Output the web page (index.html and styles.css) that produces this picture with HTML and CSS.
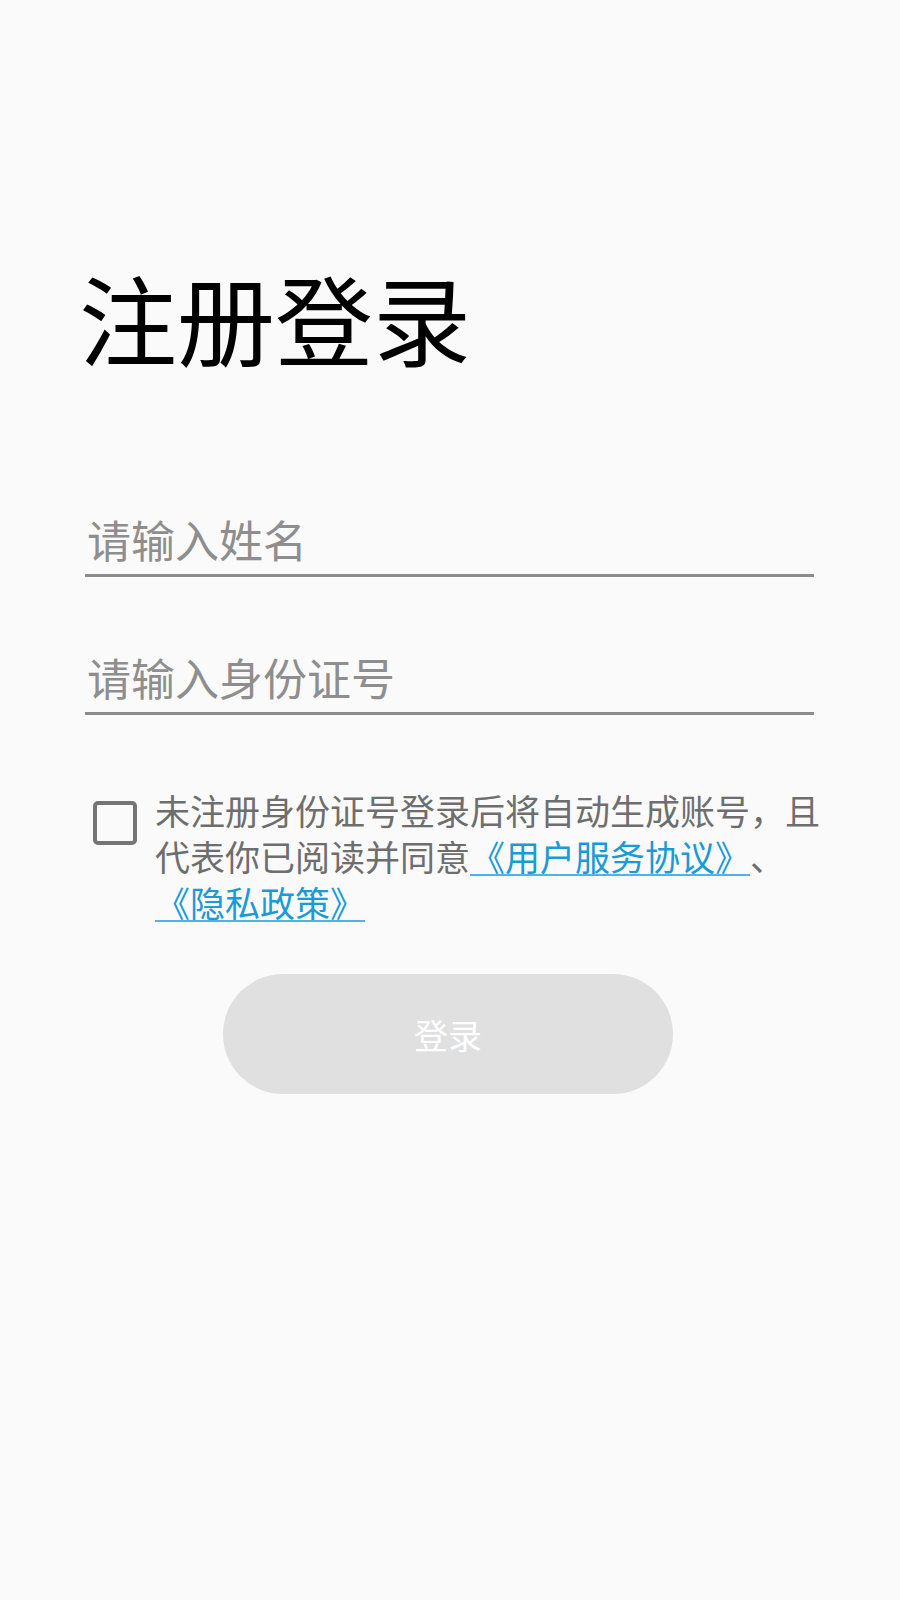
FILE: index.html
```html
<!DOCTYPE html>
<html lang="zh-CN">
<head>
<meta charset="utf-8">
<title>注册登录</title>
<link rel="stylesheet" href="styles.css">
</head>
<body>
<main class="page">
  <h1 class="title">注册登录</h1>
  <form class="form">
    <input class="field" type="text" placeholder="请输入姓名">
    <input class="field field-id" type="text" placeholder="请输入身份证号">
    <div class="agree">
      <span class="check"></span>
      <p class="agree-text"><span class="seg">未注册身份证号登录后将自动生成账号，且</span><br><span class="seg">代表你已阅读并同意</span><a class="link" href="#">《用户服务协议》</a><span class="seg">、</span><br><a class="link" href="#">《隐私政策》</a></p>
    </div>
    <button class="login" type="button">登录</button>
  </form>
</main>
</body>
</html>
```
FILE: styles.css
```css
html, body {
  margin: 0;
  padding: 0;
  background: #fafafa;
}
body {
  font-family: "Noto Sans CJK SC", "Noto Sans", sans-serif;
  text-spacing-trim: space-all;
}
.page {
  padding: 267px 86px 0 79px;
}
.title {
  margin: 0;
  font-size: 98px;
  line-height: 98px;
  font-weight: 400;
  color: #000;
}
.form {
  display: flex;
  flex-direction: column;
  margin-top: 152px;
  padding-left: 6px;
}
.field {
  display: block;
  width: 100%;
  box-sizing: border-box;
  margin: 0;
  padding: 0 0 13px 2px;
  border: 0;
  border-bottom: 3px solid #8c8c8c;
  background: transparent;
  font-family: "Noto Sans CJK SC", sans-serif;
  font-size: 44px;
  line-height: 44px;
  height: 60px;
  color: #333;
  outline: none;
}
.field::placeholder {
  color: #8e8e8e;
}
.field-id {
  margin-top: 78px;
}
.agree {
  display: flex;
  align-items: flex-start;
  margin-top: 72px;
  margin-right: -20px;
  padding-left: 8px;
}
.check {
  flex: none;
  width: 44px;
  height: 44px;
  box-sizing: border-box;
  border: 4px solid #757575;
  border-radius: 5px;
  margin-top: 14px;
}
.agree-text {
  margin: 0 0 0 18px;
  font-size: 35px;
  line-height: 46px;
  color: #6e6e6e;
  white-space: nowrap;
}
.link {
  color: #1a9ad6;
  text-decoration: underline;
  text-decoration-color: #4fb3e3;
  text-underline-offset: 3px;
  text-decoration-thickness: 2px;
}
.login {
  align-self: center;
  margin: 49px 0 0 -3px;
  width: 450px;
  height: 120px;
  border: 0;
  border-radius: 60px;
  background: #e0e0e0;
  color: #fff;
  font-family: "Noto Sans CJK SC", sans-serif;
  font-size: 34px;
}
```
